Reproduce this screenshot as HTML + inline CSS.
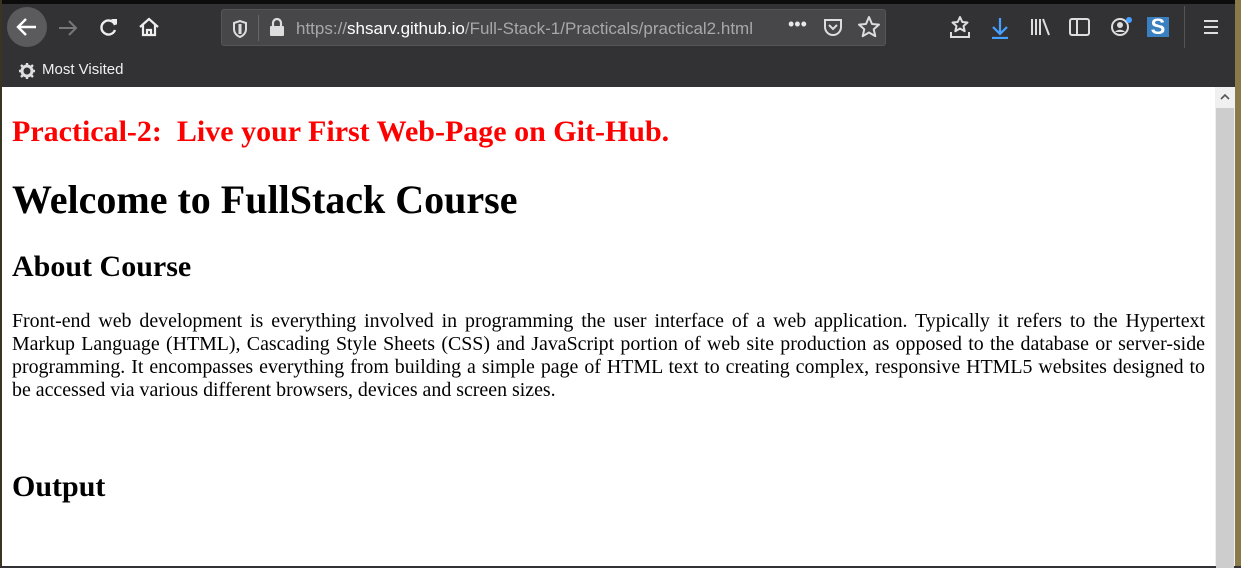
<!DOCTYPE html>
<html><head><meta charset="utf-8"><style>
*{margin:0;padding:0;box-sizing:border-box}
body{width:1241px;height:566px;overflow:hidden;background:#323234;position:relative;font-family:"Liberation Sans",sans-serif}
.top{position:absolute;left:0;top:0;width:1241px;height:4px;background:#0c0c0d}
.lb{position:absolute;left:0;top:0;width:2px;height:566px;background:#3a3520;z-index:5}
.rb{position:absolute;right:0;top:0;width:6px;height:566px;background:#8a7a4a;z-index:5}
.url{position:absolute;left:221px;top:9px;width:665px;height:37px;background:#474749;border:1px solid #555;border-radius:3px}
.urltext{position:absolute;left:296px;top:19px;font-size:17px;color:#a8a8aa;white-space:nowrap}
.urltext b{font-weight:normal;color:#fff}
.bm{position:absolute;left:42px;top:61px;color:#f0f0f0;font-size:15px}
.content{position:absolute;left:2px;top:87px;width:1233px;height:479px;background:#fff;font-family:"Liberation Serif",serif;color:#000}
.sb{position:absolute;left:1213px;top:0;width:20px;height:479px;background:#f0f0f0}
.thumb{position:absolute;left:1px;top:21px;width:18px;height:460px;background:#cdcdcd}
.t{position:absolute;left:10px;white-space:nowrap;font-weight:bold}
.p{position:absolute;left:10px;top:223px;width:1193px;font-size:19.9px;line-height:23px}
.p div{white-space:nowrap;text-align:justify;text-align-last:justify}
.p div.l{text-align-last:left}
.ic{position:absolute;color:#e8e8e8;font-size:20px}
</style></head><body>
<div class="top"></div><div class="lb"></div><div class="rb"></div>
<div style="position:absolute;left:7px;top:7px;width:40px;height:40px;border-radius:50%;background:#5b5b5d"></div>
<svg style="position:absolute;left:15px;top:16px" width="24" height="22" viewBox="0 0 24 22"><path d="M21 11H4M11 3L3 11l8 8" stroke="#fff" stroke-width="2.4" fill="none"/></svg>
<svg style="position:absolute;left:57px;top:18px" width="22" height="20" viewBox="0 0 22 20"><path d="M2 10h17M12 3l7 7-7 7" stroke="#777" stroke-width="2" fill="none"/></svg>
<svg style="position:absolute;left:98px;top:16px" width="22" height="22" viewBox="0 0 22 22"><path d="M17 9A7 7 0 1 0 17 14" stroke="#eee" stroke-width="2.4" fill="none"/><path d="M13 3h6v6z" fill="#eee"/></svg>
<svg style="position:absolute;left:137px;top:15px" width="24" height="24" viewBox="0 0 24 24"><path d="M3 12L12 4l9 8M6 10v10h12V10M10 20v-5h4v5" stroke="#eee" stroke-width="2.2" fill="none"/></svg>
<div class="url"></div>
<svg style="position:absolute;left:231px;top:19px" width="18" height="20" viewBox="0 0 18 20"><path d="M9 2L3 4v6c0 4 3 7 6 8 3-1 6-4 6-8V4z" stroke="#ddd" stroke-width="2" fill="none"/><path d="M9 5v10" stroke="#ddd" stroke-width="3"/></svg>
<div style="position:absolute;left:258px;top:15px;width:1px;height:26px;background:#666"></div>
<svg style="position:absolute;left:268px;top:17px" width="18" height="20" viewBox="0 0 18 20"><path d="M5 9V6a4 4 0 0 1 8 0v3" stroke="#ddd" stroke-width="2.2" fill="none"/><rect x="2" y="9" width="14" height="10" rx="1" fill="#ddd"/></svg>
<div class="urltext">https://<b>shsarv.github.io</b>/Full-Stack-1/Practicals/practical2.html</div>
<div class="ic" style="left:788px;top:14px;font-size:18px">•••</div>
<svg style="position:absolute;left:822px;top:16px" width="22" height="22" viewBox="0 0 22 22"><path d="M3 4h16v7a8 8 0 0 1-16 0z" stroke="#ddd" stroke-width="2" fill="none"/><path d="M7 9l4 4 4-4" stroke="#ddd" stroke-width="2" fill="none"/></svg>
<svg style="position:absolute;left:857px;top:15px" width="24" height="24" viewBox="0 0 24 24"><path d="M12 2l3 7 7 .6-5.3 4.6 1.6 7L12 17.5 5.7 21.2l1.6-7L2 9.6 9 9z" stroke="#ddd" stroke-width="2" fill="none" stroke-linejoin="round"/></svg>
<svg style="position:absolute;left:949px;top:15px" width="22" height="24" viewBox="0 0 22 24"><path d="M11 2l2.3 5 5.2.5-4 3.5 1.2 5.2L11 13.5 6.3 16.2l1.2-5.2-4-3.5L8.7 7z" stroke="#ddd" stroke-width="2" fill="none" stroke-linejoin="round"/><path d="M2 17v5h18v-5" stroke="#ddd" stroke-width="2" fill="none"/></svg>
<svg style="position:absolute;left:990px;top:17px" width="20" height="22" viewBox="0 0 20 22"><path d="M10 1v15M3 10l7 7 7-7M2 21h16" stroke="#45a1ff" stroke-width="2.2" fill="none"/></svg>
<svg style="position:absolute;left:1030px;top:17px" width="22" height="20" viewBox="0 0 22 20"><path d="M2 2v16M6 2v16M10 2v16M13 2l6 16" stroke="#ddd" stroke-width="2" fill="none"/></svg>
<svg style="position:absolute;left:1069px;top:17px" width="22" height="20" viewBox="0 0 22 20"><rect x="1" y="2" width="19" height="16" rx="2" stroke="#ddd" stroke-width="2" fill="none"/><path d="M8 2v16" stroke="#ddd" stroke-width="2"/></svg>
<svg style="position:absolute;left:1110px;top:16px" width="24" height="22" viewBox="0 0 24 22"><circle cx="10" cy="11" r="8" stroke="#ddd" stroke-width="2" fill="none"/><circle cx="10" cy="9" r="3" fill="#ddd"/><path d="M5 16c2-3 8-3 10 0" fill="#ddd"/><circle cx="19" cy="4" r="3" fill="#45a1ff"/></svg>
<div style="position:absolute;left:1147px;top:17px;width:22px;height:20px;background:#3a7fc0;color:#fff;font-weight:bold;font-size:22px;line-height:20px;text-align:center;font-family:'Liberation Sans',sans-serif">S</div>
<div style="position:absolute;left:1184px;top:6px;width:1px;height:42px;background:#555"></div>
<svg style="position:absolute;left:1202px;top:19px" width="18" height="16" viewBox="0 0 18 16"><path d="M2 2h14M2 8h14M2 14h14" stroke="#ddd" stroke-width="2"/></svg>
<svg style="position:absolute;left:18px;top:62px" width="18" height="18" viewBox="0 0 18 18"><circle cx="9" cy="9" r="5" stroke="#ddd" stroke-width="3" fill="none"/><path d="M9 1v4M9 13v4M1 9h4M13 9h4M3 3l3 3M12 12l3 3M3 15l3-3M12 6l3-3" stroke="#ddd" stroke-width="2.4"/></svg>
<div class="bm">Most Visited</div>
<div class="content">
<div class="t" style="top:28px;font-size:30px;color:#f00">Practical-2:&nbsp; Live your First Web-Page on Git-Hub.</div>
<div class="t" style="top:89px;font-size:40px">Welcome to FullStack Course</div>
<div class="t" style="top:163px;font-size:30px">About Course</div>
<div class="p">
<div>Front-end web development is everything involved in programming the user interface of a web application. Typically it refers to the Hypertext</div>
<div>Markup Language (HTML), Cascading Style Sheets (CSS) and JavaScript portion of web site production as opposed to the database or server-side</div>
<div>programming. It encompasses everything from building a simple page of HTML text to creating complex, responsive HTML5 websites designed to</div>
<div class="l">be accessed via various different browsers, devices and screen sizes.</div>
</div>
<div class="t" style="top:383px;font-size:30px">Output</div>
<div class="sb"><div class="thumb"></div><svg style="position:absolute;left:5px;top:6px" width="10" height="8" viewBox="0 0 10 8"><path d="M1 6l4-4 4 4" stroke="#555" stroke-width="1.6" fill="none"/></svg></div>
</div>
</body></html>
